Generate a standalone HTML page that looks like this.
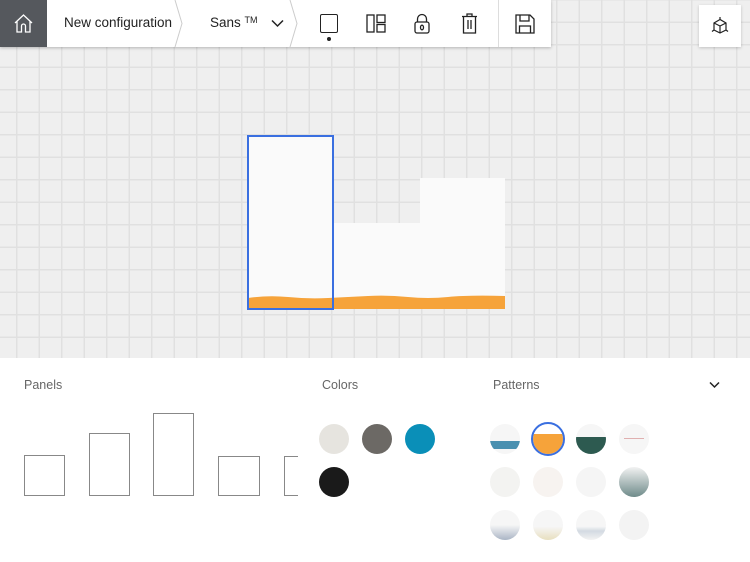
<!DOCTYPE html>
<html><head><style>
*{margin:0;padding:0;box-sizing:border-box}
body{width:750px;height:562px;overflow:hidden;position:relative;background:#fff;font-family:"Liberation Sans",sans-serif}
#canvas{position:absolute;left:0;top:0;width:750px;height:358px;background-color:#efefef;
background-image:linear-gradient(to right,#e0e0e0 0,#e0e0e0 1.5px,transparent 1.5px),linear-gradient(to bottom,#e0e0e0 0,#e0e0e0 1.5px,transparent 1.5px);
background-size:22.5px 22.5px;background-position:16px -1px}
.abs{position:absolute}
.bar{position:absolute;left:0;top:0;width:551px;height:47px;background:#fff;box-shadow:0 1px 3px rgba(0,0,0,.25)}
.txt{position:absolute;font-size:13.5px;color:#222}
.lbl{position:absolute;font-size:12.5px;color:#666}
.c{position:absolute;width:30px;height:30px;border-radius:50%}
.p{position:absolute;width:30px;height:30px;border-radius:50%;background:#f6f6f6;overflow:hidden}
.pr{position:absolute;border:1px solid #888}
</style></head><body>
<div id="canvas"></div>
<div class="bar">
  <div class="abs" style="left:0;top:0;width:47px;height:47px;background:#55585d"></div>
  <svg class="abs" style="left:13px;top:13px" width="21" height="21" viewBox="0 0 21 21" fill="none" stroke="#fff" stroke-width="1.3"><path d="M2 10 L10.5 2 L19 10 M4 8.5 V19 H8.5 V13 A2 2 0 0 1 12.5 13 V19 H17 V8.5"/></svg>
  <div class="txt" style="left:64px;top:15px">New configuration</div>
  <svg class="abs" style="left:172px;top:0" width="140" height="47" fill="none" stroke="#ccc" stroke-width="1"><path d="M3 0 L10 23.5 L3 47 M118 0 L125 23.5 L118 47"/></svg>
  <div class="txt" style="left:210px;top:15px">Sans <span style="font-size:9px;vertical-align:4px">TM</span></div>
  <svg class="abs" style="left:271px;top:19px" width="13" height="9" fill="none" stroke="#222" stroke-width="1.5"><path d="M1 1.5 L6.5 7 L12 1.5"/></svg>
  <div class="abs" style="left:320px;top:14px;width:18px;height:19px;border:1.4px solid #222;border-radius:2px"></div>
  <div class="abs" style="left:327px;top:37px;width:4px;height:4px;border-radius:50%;background:#222"></div>
  <svg class="abs" style="left:366px;top:14px" width="20" height="19" fill="none" stroke="#222" stroke-width="1.3"><rect x="1" y="1" width="7" height="17"/><rect x="11" y="1" width="8" height="7.5"/><rect x="11" y="10.5" width="8" height="7.5"/></svg>
  <svg class="abs" style="left:413px;top:13px" width="18" height="21" fill="none" stroke="#222" stroke-width="1.3"><rect x="2" y="9" width="14" height="11" rx="2"/><path d="M4.5 9 V6 A4.5 4.5 0 0 1 13.5 6 V9"/><ellipse cx="9" cy="14.5" rx="1.5" ry="2.3"/></svg>
  <svg class="abs" style="left:461px;top:13px" width="17" height="21" fill="none" stroke="#222" stroke-width="1.3"><path d="M1 3.5 H16 M6 3.5 V1 H11 V3.5 M2.5 3.5 V20 H14.5 V3.5 M7 7 V16 M10 7 V16"/></svg>
  <div class="abs" style="left:498px;top:0;width:1px;height:47px;background:#ddd"></div>
  <svg class="abs" style="left:515px;top:14px" width="20" height="20" fill="none" stroke="#222" stroke-width="1.3"><path d="M1 1 H15 L19 5 V19 H1 Z M5 1 V7 H14 V1 M4.5 19 V12 H15.5 V19"/></svg>
</div>
<div class="abs" style="left:699px;top:5px;width:42px;height:42px;background:#fff;box-shadow:0 1px 3px rgba(0,0,0,.2)"></div>
<svg class="abs" style="left:710px;top:16px" width="20" height="20" fill="none" stroke="#222" stroke-width="1.2"><path d="M10 1 V3.5 M10 3.5 L4 7 V14 L10 17 L16 14 V7 Z M4 7 L10 10 L16 7 M10 10 V17 M4 14 L2 15.5 M16 14 L18 15.5"/></svg>

<div class="abs" style="left:248px;top:136px;width:85px;height:173px;background:#fafafa"></div>
<div class="abs" style="left:333px;top:223px;width:87px;height:86px;background:#fafafa"></div>
<div class="abs" style="left:420px;top:178px;width:85px;height:131px;background:#fafafa"></div>
<svg class="abs" style="left:248px;top:292px" width="257" height="17"><path d="M0 6 Q20 3 40 5 T80 6 T120 4 T160 5 T200 5 T257 4 V17 H0 Z" fill="#f6a33a"/></svg>
<div class="abs" style="left:247px;top:135px;width:87px;height:175px;border:2px solid #3a6fe0"></div>

<div class="lbl" style="left:24px;top:378px">Panels</div>
<div class="lbl" style="left:322px;top:378px">Colors</div>
<div class="lbl" style="left:493px;top:378px">Patterns</div>
<svg class="abs" style="left:709px;top:381px" width="11" height="8" fill="none" stroke="#222" stroke-width="1.5"><path d="M1 1.5 L5.5 6 L10 1.5"/></svg>

<div class="pr" style="left:24px;top:455px;width:41px;height:41px"></div>
<div class="pr" style="left:89px;top:433px;width:41px;height:63px"></div>
<div class="pr" style="left:153px;top:413px;width:41px;height:83px"></div>
<div class="pr" style="left:218px;top:456px;width:42px;height:40px"></div>
<div class="pr" style="left:284px;top:456px;width:14px;height:40px;border-right:none"></div>

<div class="c" style="left:319px;top:424px;background:#e6e4df"></div>
<div class="c" style="left:362px;top:424px;background:#6c6965"></div>
<div class="c" style="left:405px;top:424px;background:#0a8fb8"></div>
<div class="c" style="left:319px;top:467px;background:#1a1a1a"></div>

<div class="p" style="left:490px;top:424px"><div class="abs" style="left:0;top:17px;width:30px;height:8px;background:#4a90b0"></div></div>
<div class="p" style="left:533px;top:424px;background:#fff"><div class="abs" style="left:0;top:10px;width:30px;height:20px;background:#f6a33a"></div></div>
<div class="abs" style="left:531px;top:422px;width:34px;height:34px;border-radius:50%;border:2px solid #3a6fe0"></div>
<div class="p" style="left:576px;top:424px"><div class="abs" style="left:0;top:13px;width:30px;height:17px;background:#2d5a50"></div></div>
<div class="p" style="left:619px;top:424px"><div class="abs" style="left:5px;top:14px;width:20px;height:1px;background:#e0b0b0"></div></div>
<div class="p" style="left:490px;top:467px;background:#f3f3f1"></div>
<div class="p" style="left:533px;top:467px;background:#f7f3f0"></div>
<div class="p" style="left:576px;top:467px;background:#f5f5f5"></div>
<div class="p" style="left:619px;top:467px;background:linear-gradient(#f2f2f2,#6f8b8a)"></div>
<div class="p" style="left:490px;top:510px;background:linear-gradient(#f6f6f6 50%,#aab5c5)"></div>
<div class="p" style="left:533px;top:510px;background:linear-gradient(#f6f6f6 55%,#e8dfbf)"></div>
<div class="p" style="left:576px;top:510px;background:linear-gradient(#f6f6f6 55%,#d3dae2 70%,#f3f3f3)"></div>
<div class="p" style="left:619px;top:510px;background:#f3f3f3"></div>
</body></html>
